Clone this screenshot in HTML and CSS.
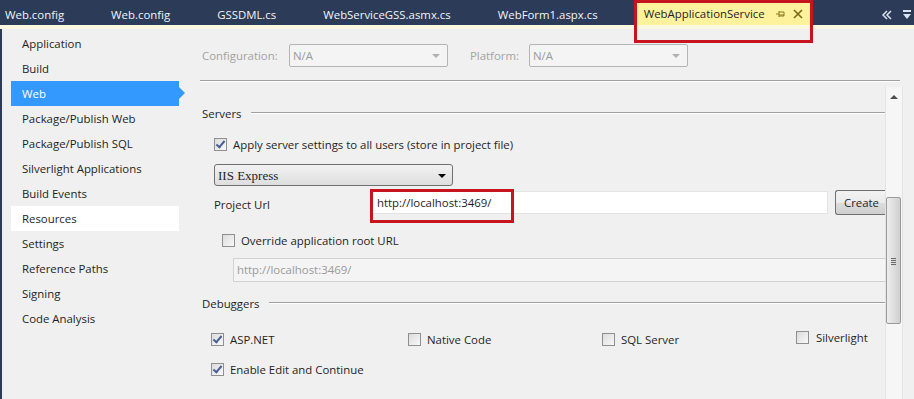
FILE: index.html
```html
<!DOCTYPE html>
<html lang="en">
<head>
  <meta charset="UTF-8">
  <title>WebApplicationService - Properties</title>
  <link rel="stylesheet" href="styles.css">
</head>
<body>

  <div class="tabbar">
    <span class="tab">Web.config</span>
    <span class="tab">Web.config</span>
    <span class="tab">GSSDML.cs</span>
    <span class="tab">WebServiceGSS.asmx.cs</span>
    <span class="tab">WebForm1.aspx.cs</span>
    <span class="tab active">
      WebApplicationService
      <svg class="pin" width="10" height="10" viewBox="0 0 10 10"><path d="M1 5h3M4 2v6M4 3h5v4H4M4 6h5" stroke="#8a7a1c" fill="none" stroke-width="1"/></svg>
      <svg class="close" width="10" height="10" viewBox="0 0 10 10"><path d="M1 1l8 8M9 1l-8 8" stroke="#7a6a14" stroke-width="1.6"/></svg>
      <span class="highlight tab-highlight"></span>
    </span>
    <span class="tab-tools">
      <svg width="10" height="10" viewBox="0 0 10 10"><path d="M5 1L1 5l4 4M9 1L5 5l4 4" stroke="#dce4f2" fill="none" stroke-width="1.5"/></svg>
      <svg width="10" height="10" viewBox="0 0 10 10"><path d="M1 1h8" stroke="#dce4f2" stroke-width="2"/><path d="M1 4h8L5 9z" fill="#dce4f2"/></svg>
    </span>
  </div>
  <div class="doc-strip"></div>

  <div class="main">
    <ul class="sidebar">
      <li>Application</li>
      <li>Build</li>
      <li class="selected">Web</li>
      <li>Package/Publish Web</li>
      <li>Package/Publish SQL</li>
      <li>Silverlight Applications</li>
      <li>Build Events</li>
      <li class="hover">Resources</li>
      <li>Settings</li>
      <li>Reference Paths</li>
      <li>Signing</li>
      <li>Code Analysis</li>
    </ul>

    <div class="content">
      <div class="config-row">
        <span class="label disabled">Configuration:</span>
        <span class="combo disabled">N/A <i class="arrow"></i></span>
        <span class="label disabled platform">Platform:</span>
        <span class="combo disabled">N/A <i class="arrow"></i></span>
      </div>
      <div class="separator"></div>

      <div class="panel">
        <div class="panel-body">
          <div class="group-title servers">Servers</div>

          <label class="check row-apply"><span class="box checked"></span>Apply server settings to all users (store in project file)</label>

          <div class="server-combo">IIS Express <i class="arrow dark"></i></div>

          <div class="url-row">
            <span class="url-label">Project Url</span>
            <span class="textbox">http://localhost:3469/<span class="highlight url-highlight"></span></span>
            <button class="create-btn">Create</button>
          </div>

          <label class="check row-override"><span class="box"></span>Override application root URL</label>
          <div class="textbox disabled wide">http://localhost:3469/</div>

          <div class="group-title debuggers">Debuggers</div>

          <div class="debug-grid">
            <label class="check"><span class="box checked"></span>ASP.NET</label>
            <label class="check"><span class="box"></span>Native Code</label>
            <label class="check"><span class="box"></span>SQL Server</label>
            <label class="check silverlight"><span class="box"></span>Silverlight</label>
          </div>
          <label class="check row-edit"><span class="box checked"></span>Enable Edit and Continue</label>
        </div>

        <div class="scrollbar">
          <svg class="up" width="8" height="6" viewBox="0 0 8 6"><path d="M0 5L4 1l4 4z" fill="#4d4d4d"/></svg>
          <div class="thumb"><span class="grip"></span></div>
        </div>
      </div>
    </div>
  </div>

</body>
</html>
```

FILE: styles.css
```css
body {
  margin: 0;
  font-family: 'Open Sans', 'Noto Sans', sans-serif;
  font-size: 11.4px;
  color: #1e1e1e;
  background-color: #f0f0f0;
  width: 914px;
  height: 399px;
  overflow: hidden;
}

.tabbar {
  height: 25px;
  background-color: #2b3b58;
  display: flex;
  align-items: flex-end;
}

.tab {
  color: #f2f4f8;
  height: 22px;
  line-height: 23px;
  padding: 0 5px;
  margin-right: 37px;
  white-space: nowrap;
}

.tab.active {
  position: relative;
  background-color: #fff29d;
  color: #1e1e1e;
  margin-left: -3px;
  padding: 0 7px 0 7px;
  display: flex;
  align-items: center;
  height: 23px;
  line-height: 23px;
  margin-right: 0;
}

.tab .pin {
  margin-left: 10px;
}

.tab .close {
  margin-left: 8px;
}

.tab-tools {
  margin-left: auto;
  display: flex;
  gap: 10px;
  padding-right: 2px;
  height: 20px;
  align-items: center;
}

.highlight {
  position: absolute;
  border: 3px solid #c8141e;
  pointer-events: none;
}

.tab-highlight {
  left: -3px;
  right: -3px;
  top: -2px;
  height: 37px;
  z-index: 2;
}

.doc-strip {
  height: 4px;
  background-color: #fbf8e1;
}

.main {
  display: flex;
  height: 370px;
}

.sidebar {
  flex: none;
  list-style: none;
  margin: 0;
  padding: 2px 0 0 0;
  width: 186px;
  border-left: 2px solid #2b3b58;
  box-sizing: border-box;
}

.sidebar li {
  position: relative;
  height: 25px;
  line-height: 25px;
  margin-left: 9px;
  width: 168px;
  padding-left: 11px;
  box-sizing: border-box;
}

.sidebar li.selected {
  background-color: #3399ff;
  color: #fff;
}

.sidebar li.selected::after {
  content: "";
  position: absolute;
  right: -6px;
  top: 6px;
  border-left: 6px solid #3399ff;
  border-top: 6px solid transparent;
  border-bottom: 6px solid transparent;
}

.sidebar li.hover {
  background-color: #fff;
}

.content {
  flex: 1;
  min-width: 0;
  display: flex;
  flex-direction: column;
}

.config-row {
  display: flex;
  align-items: center;
  height: 24px;
  margin-top: 14px;
  padding-left: 16px;
}

.label.disabled {
  color: #a3a3a3;
}

.label {
  width: 87px;
}

.label.platform {
  width: auto;
  margin-left: 22px;
  margin-right: 10px;
}

.combo {
  position: relative;
  width: 159px;
  height: 23px;
  line-height: 21px;
  box-sizing: border-box;
  border: 1px solid #b5b5b5;
  border-radius: 2px;
  background-color: #f4f4f4;
  padding-left: 3px;
  color: #9a9a9a;
}

.arrow {
  position: absolute;
  right: 7px;
  top: 9px;
  border-top: 4px solid #b0b0b0;
  border-left: 4px solid transparent;
  border-right: 4px solid transparent;
}

.arrow.dark {
  border-top-color: #000;
  right: 6px;
}

.separator {
  height: 1px;
  background-color: #a0a0a0;
  margin: 13px 14px 0 14px;
  border-bottom: 1px solid #fff;
}

.panel {
  flex: 1;
  display: flex;
  margin-top: 5px;
  overflow: hidden;
}

.panel-body {
  flex: none;
  width: 699px;
  box-sizing: border-box;
  padding-left: 16px;
  overflow: hidden;
  position: relative;
}

.group-title {
  display: flex;
  align-items: center;
  height: 20px;
  margin-top: 9px;
}

.group-title.servers {
  margin-top: 16px;
}

.group-title::after {
  content: "";
  flex: 1;
  height: 1px;
  background-color: #a0a0a0;
  margin-left: 10px;
  border-bottom: 1px solid #fff;
}

.check {
  display: flex;
  align-items: center;
  height: 18px;
  white-space: nowrap;
}

.box {
  width: 11px;
  height: 11px;
  border: 1px solid #8e8f8f;
  background: linear-gradient(135deg, #dcdcdc, #f8f8f8);
  margin-right: 6px;
  position: relative;
  flex: none;
}

.box.checked::after {
  content: "";
  position: absolute;
  left: 3px;
  top: 0px;
  width: 3px;
  height: 7px;
  border-right: 2px solid #4a5f97;
  border-bottom: 2px solid #4a5f97;
  transform: rotate(40deg);
}

.row-apply {
  margin-top: 12px;
  margin-left: 12px;
}

.server-combo {
  position: relative;
  margin-top: 11px;
  margin-left: 12px;
  width: 239px;
  height: 22px;
  line-height: 21px;
  box-sizing: border-box;
  border: 1px solid #707070;
  border-radius: 3px;
  background: linear-gradient(#f2f2f2, #dedede);
  padding-left: 3px;
  font-family: 'Liberation Serif', serif;
  font-size: 13px;
}

.url-row {
  display: flex;
  align-items: flex-start;
  margin-top: 11px;
  margin-left: 12px;
  height: 34px;
}

.url-row > * {
  flex: none;
}

.url-label {
  width: 156px;
  line-height: 16px;
}

.textbox {
  position: relative;
  width: 458px;
  height: 23px;
  line-height: 22px;
  box-sizing: border-box;
  background-color: #fff;
  border: 1px solid #e3e3e3;
  padding-left: 6px;
  margin-top: -6px;
}

.url-highlight {
  left: -1px;
  top: -3px;
  width: 138px;
  height: 28px;
}

.create-btn {
  margin-left: 7px;
  margin-top: -7px;
  width: 50px;
  height: 25px;
  font-family: inherit;
  font-size: 11.4px;
  text-align: left;
  padding: 0 0 0 8px;
  border: 1px solid #707070;
  border-right: none;
  border-radius: 3px 0 0 3px;
  background: linear-gradient(#f2f2f2, #ebebeb 50%, #dddddd 51%, #cfcfcf);
  color: #1e1e1e;
  white-space: nowrap;
}

.row-override {
  margin-left: 20px;
}

.textbox.wide {
  width: 660px;
  margin-top: 9px;
  margin-left: 31px;
  border: 1px solid #d2d2d2;
  background-color: #f4f4f4;
  color: #9a9a9a;
  padding-left: 3px;
}

.textbox.disabled {
  height: 24px;
}

.group-title.debuggers {
  margin-top: 11px;
}

.debug-grid {
  display: grid;
  grid-template-columns: 197px 194px 194px auto;
  margin-top: 17px;
  margin-left: 9px;
}

.debug-grid .silverlight {
  margin-top: -2px;
}

.debug-grid .silverlight .box {
  margin-right: 7px;
}

.row-edit {
  margin-top: 12px;
  margin-left: 9px;
}

.scrollbar {
  position: relative;
  width: 16px;
  background-color: #f6f6f6;
  border-left: 1px solid #e4e4e4;
  border-right: 1px solid #e4e4e4;
}

.scrollbar .up {
  position: absolute;
  left: 4px;
  top: 7px;
}

.thumb {
  position: absolute;
  left: 0;
  top: 110px;
  width: 15px;
  height: 127px;
  box-sizing: border-box;
  border: 1px solid #9a9a9a;
  border-radius: 2px;
  background: linear-gradient(90deg, #ededed, #dcdcdc 60%, #cfcfcf);
}

.grip {
  position: absolute;
  left: 4px;
  top: 60px;
  width: 5px;
  height: 7px;
  background: repeating-linear-gradient(#6a6a6a 0 1px, transparent 1px 2px);
}
```
